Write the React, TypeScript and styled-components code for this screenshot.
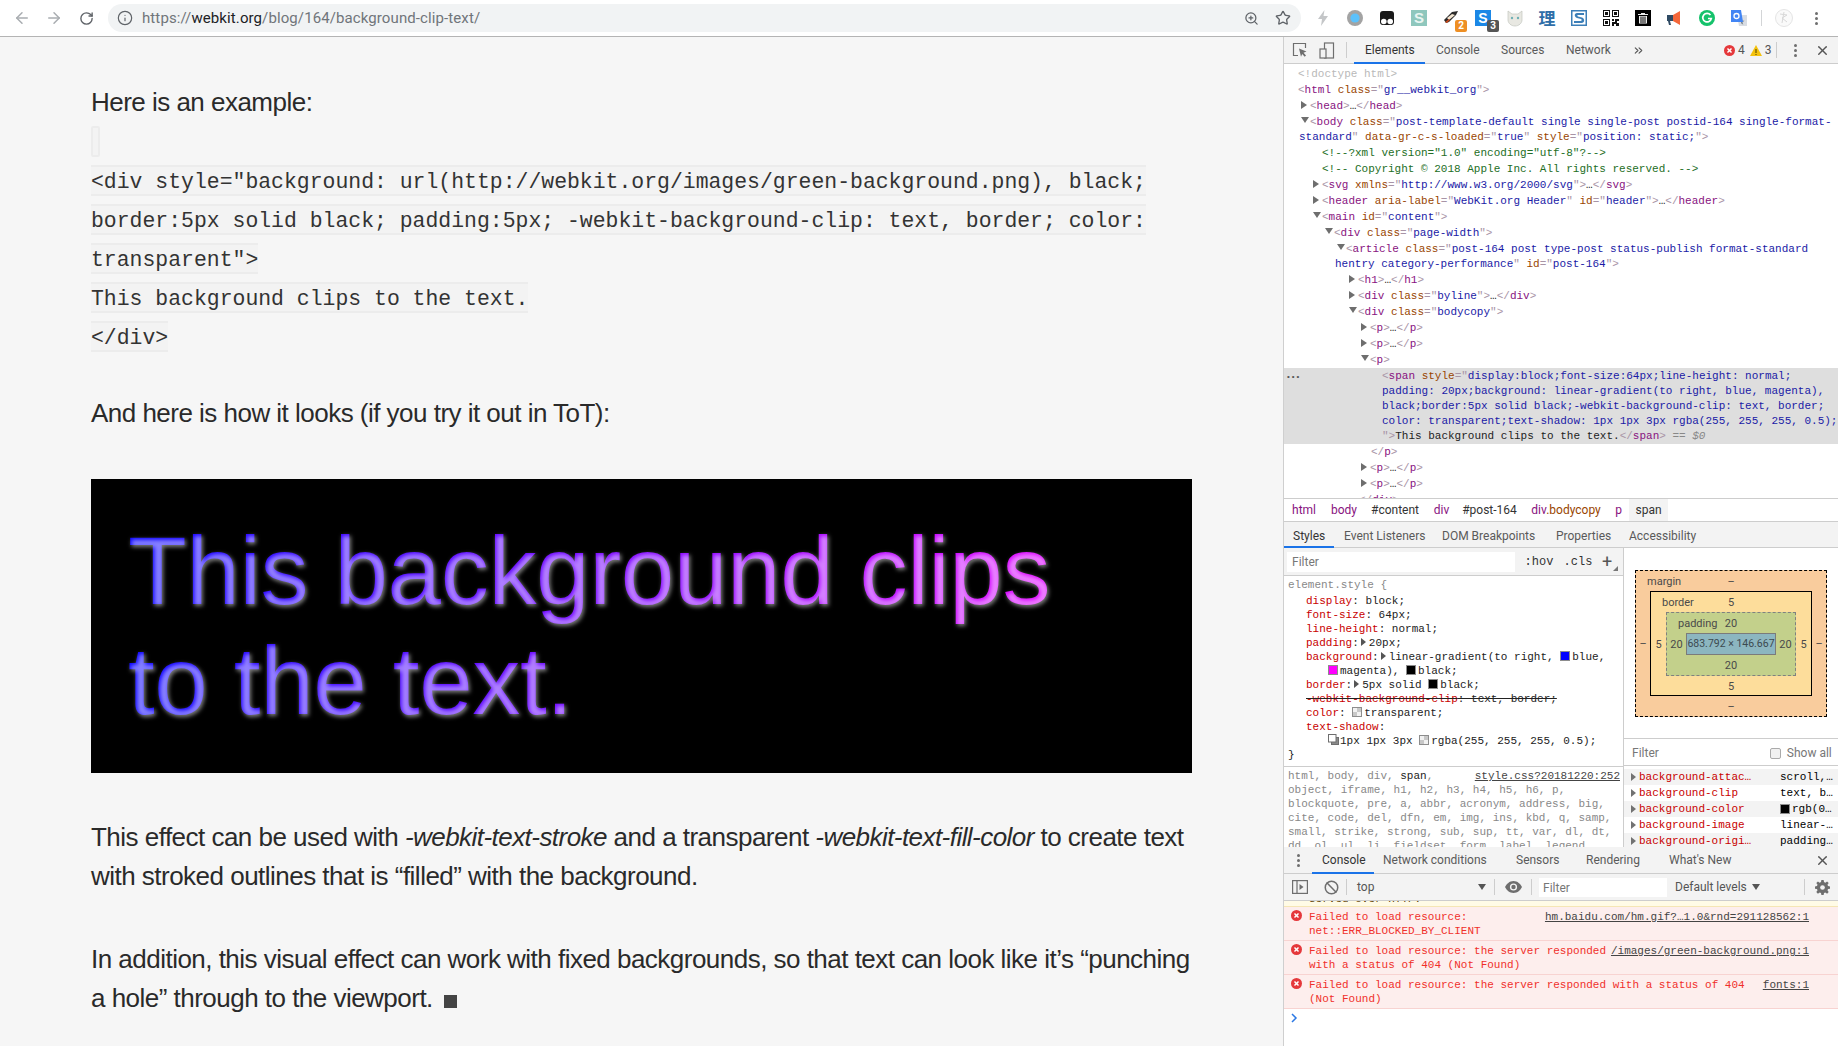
import React from 'react';
import styled, { createGlobalStyle } from 'styled-components';
import { ArrowLeft, ArrowRight, RotateCw, Info, ZoomIn, Star, X, ChevronsRight, Ban } from 'lucide-react';

const MONO = `"Liberation Mono", monospace`;
const UI = `Roboto, "Liberation Sans", sans-serif`;

const Global = createGlobalStyle`
  html, body { margin: 0; padding: 0; background: #fff; }
  * { box-sizing: border-box; }
`;

const Shell = styled.div`
  width: 1838px; height: 1046px; overflow: hidden;
  display: flex; flex-direction: column; font-family: ${UI};
`;

/* ---------- Browser chrome ---------- */
const Chrome = styled.header`
  height: 37px; flex: none; display: flex; align-items: center;
  padding: 0 6px; background: #fff; border-bottom: 1px solid #b4b4b4;
`;
const NavSlot = styled.div<{ $dim?: boolean }>`
  width: 32px; height: 32px; display: flex; align-items: center; justify-content: center;
  color: ${p => (p.$dim ? '#a9adb1' : '#5f6368')};
`;
const Pill = styled.div`
  flex: 1; height: 28px; margin: 0 6px; background: #f1f3f4; border-radius: 14px;
  display: flex; align-items: center; padding: 0 2px 0 9px;
`;
const UrlInfo = styled.div`
  width: 16px; height: 16px; margin-right: 9px; color: #5f6368; display: flex;
`;
const Url = styled.div`
  flex: 1; font-size: 15px; letter-spacing: .1px; color: #70757a; white-space: nowrap;
  b { font-weight: 400; color: #202124; }
`;
const Slot = styled.div`
  width: 32px; height: 28px; flex: none; position: relative;
  display: flex; align-items: center; justify-content: center; color: #5f6368;
`;
const Badge = styled.span<{ $bg: string }>`
  position: absolute; right: 0; bottom: 0; width: 12px; height: 12px; border-radius: 2px;
  background: ${p => p.$bg}; color: #fff; font: 700 10px/12px ${UI}; text-align: center;
`;
const Letter = styled.span<{ $bg: string; $fg: string; $size?: number }>`
  width: 16px; height: 16px; display: block; background: ${p => p.$bg}; color: ${p => p.$fg};
  font: 700 ${p => p.$size || 14}px/16px "Liberation Sans", sans-serif; text-align: center;
`;
const Han = styled.span`
  font: 700 17px/18px "Noto Sans CJK SC", sans-serif; color: #2f6ea8;
`;
const ChromeSep = styled.div`
  width: 13px; flex: none; height: 16px; display: flex; justify-content: center;
  &::before { content: ''; width: 1px; background: #d3d5d7; }
`;

/* ---------- Main split ---------- */
const Split = styled.div`
  flex: 1; min-height: 0; display: flex;
`;
const Page = styled.main`
  width: 1283px; flex: none; background: #f6f6f6; padding: 46px 91px 0;
  overflow: hidden; color: #2a2a2a;
`;
const Para = styled.p<{ $before?: number; $after?: number }>`
  margin: ${p => p.$before ?? 0}px 0 ${p => p.$after ?? 0}px; width: 1101px;
  font: 26px/39px "Liberation Sans", Arial, sans-serif; letter-spacing: -0.52px;
  em { font-style: italic; letter-spacing: -0.55px; }
`;
const CodeLine = styled.div`
  height: 39px; display: flex; align-items: center;
`;
const Chip = styled.code<{ $empty?: boolean }>`
  display: block; height: 31px; min-width: ${p => (p.$empty ? '9px' : '0')}; padding-top: 2px;
  background: #f3f3f3; border-top: 2px solid #ececec; border-bottom: 2px solid #ececec;
  ${p => p.$empty && 'border-left: 2px solid #ececec; border-right: 2px solid #ececec; border-radius: 2px;'}
  font: 21.45px/27px ${MONO}; white-space: pre; color: #333;
`;
const Clip = styled.div`
  width: 1101px; margin-bottom: 45px;
  font: 96px/110px "Liberation Sans", Arial, sans-serif; letter-spacing: -0.3px;
  padding: 30px; border: 7.5px solid #000;
  background: linear-gradient(to right, blue, magenta), #000;
  -webkit-background-clip: text, border-box;
  background-clip: text, border-box;
  color: transparent;
  text-shadow: 1.5px 1.5px 4.5px rgba(255, 255, 255, .5);
`;
const Square = styled.span`
  display: inline-block; width: 13px; height: 13px; background: #444; margin-left: 4px; vertical-align: -1px;
`;

/* ---------- Devtools ---------- */
const Dev = styled.aside`
  flex: 1; min-width: 0; display: flex; flex-direction: column;
  border-left: 1px solid #cfcfcf; background: #fff; overflow: hidden;
`;
const Bar = styled.div<{ $h: number; $bg?: string }>`
  height: ${p => p.$h}px; flex: none; display: flex; align-items: center;
  background: ${p => p.$bg || '#f3f3f3'}; border-bottom: 1px solid #cdcdcd; position: relative;
`;
const ToolSlot = styled.div<{ $w: number }>`
  width: ${p => p.$w}px; flex: none; height: 100%; display: flex; align-items: center; justify-content: center;
  color: #6e6e6e;
`;
const VSep = styled.div`
  width: 1px; height: 16px; flex: none; background: #cdcdcd;
`;
const Tab = styled.div<{ $w: number; $active?: boolean; $inset?: number; $drop?: number }>`
  width: ${p => p.$w}px; flex: none; height: calc(100% + 1px); margin-bottom: -1px;
  display: flex; align-items: center; padding: ${p => p.$drop ?? 0}px 0 0 ${p => p.$inset ?? 0}px;
  font-size: 12px; white-space: nowrap; color: ${p => (p.$active ? '#333' : '#5a5a5a')};
  border-bottom: 2px solid ${p => (p.$active ? '#1a73e8' : 'transparent')};
`;
const Counts = styled.div`
  display: flex; align-items: center; font-size: 12px; color: #555; flex: none;
`;
const Count = styled.span<{ $right: number }>`
  margin: 0 ${p => p.$right}px 0 3px;
`;
const Plus = styled.span`
  font-size: 18px; color: #555; line-height: 1;
`;
const Tree = styled.section`
  height: 434px; flex: none; overflow: hidden; padding-top: 2px;
  font: 11px/15px ${MONO}; color: #222;
`;
const TreeRow = styled.div<{ $x: number }>`
  padding: 1px 0 0 ${p => p.$x}px; white-space: pre;
`;
const WrapRow = styled.div<{ $x: number }>`
  padding-left: ${p => p.$x}px; white-space: pre;
`;
const Selected = styled.div`
  background: #dedede; position: relative; padding-top: 1px;
`;
const Dots = styled.span`
  position: absolute; left: 2px; top: 2px; color: #555; letter-spacing: 0; font-size: 8px; line-height: 13px;
`;
const Tw = styled.span<{ $open?: boolean }>`
  display: inline-block; width: 9px; margin-left: -9px; height: 8px; position: relative;
  &::before {
    content: ''; position: absolute; left: 0; top: 0;
    ${p => p.$open
      ? 'border-left: 4px solid transparent; border-right: 4px solid transparent; border-top: 6px solid #6e6e6e;'
      : 'border-top: 4px solid transparent; border-bottom: 4px solid transparent; border-left: 6px solid #6e6e6e;'}
  }
`;
const B = styled.span` color: #a894a6; `;
const T = styled.span` color: #881280; `;
const A = styled.span` color: #994500; `;
const V = styled.span` color: #1a1aa6; `;
const C = styled.span` color: #236e25; `;
const G = styled.span` color: #b9b9b9; `;
const Q = styled.span` color: #888; font-style: italic; `;

const Crumbs = styled.nav`
  height: 24px; flex: none; display: flex; align-items: stretch;
  border-top: 1px solid #cdcdcd; border-bottom: 1px solid #cdcdcd; font-size: 12px;
`;
const Crumb = styled.span<{ $w: number; $on?: boolean; $c?: string }>`
  width: ${p => p.$w}px; flex: none; display: flex; align-items: center; justify-content: center;
  color: ${p => p.$c || '#881280'}; background: ${p => (p.$on ? '#f3f3f3' : 'transparent')};
  b { font-weight: 400; color: #994500; }
`;
const Panes = styled.div`
  height: 299px; flex: none; display: flex; overflow: hidden;
`;
const StylesPane = styled.div`
  width: 340px; flex: none; border-right: 1px solid #cdcdcd; overflow: hidden;
`;
const FilterBar = styled.div`
  height: 28px; display: flex; align-items: center; background: #f3f3f3;
  border-bottom: 1px solid #cdcdcd; padding-left: 3px; position: relative;
`;
const FilterBox = styled.div<{ $w: number }>`
  width: ${p => p.$w}px; height: 20px; flex: none; background: #fff; padding-left: 5px;
  font-size: 12px; line-height: 20px; color: #777;
`;
const Hov = styled.span<{ $w: number }>`
  width: ${p => p.$w}px; flex: none; font: 12px ${MONO}; color: #333; text-align: center;
`;
const Corner = styled.span`
  position: absolute; right: 5px; bottom: 4px; width: 0; height: 0;
  border-left: 5px solid transparent; border-bottom: 5px solid #777;
`;
const Rule = styled.div<{ $bottom?: number; $top?: number }>`
  padding: ${p => p.$top ?? 2}px 0 ${p => p.$bottom ?? 4}px 4px;
  font: 11px/14px ${MONO}; color: #222; white-space: pre;
`;
const Selector = styled.div`
  margin-bottom: 2px; color: #888;
`;
const RuleDivider = styled.div`
  border-bottom: 1px solid #cdcdcd;
`;
const Prop = styled.div<{ $x?: number; $struck?: boolean }>`
  padding-left: ${p => p.$x ?? 18}px;
  ${p => p.$struck && 'text-decoration: line-through;'}
`;
const N = styled.span` color: #c80000; `;
const Gr = styled.span` color: #888; `;
const Dk = styled.span` color: #222; `;
const Sw = styled.span<{ $c: string }>`
  display: inline-block; width: 10px; height: 10px; margin-right: 2px; vertical-align: -1px;
  background: ${p => p.$c}; border: 1px solid #8d8d8d;
`;
const Checker = styled(Sw)`
  background: conic-gradient(#c8c8c8 0 25%, #f2f2f2 0 50%, #c8c8c8 0 75%, #f2f2f2 0);
`;
const ShadowIcon = styled.svg`
  margin-right: 1px; vertical-align: -1px;
`;
const Tri = styled.span`
  display: inline-block; width: 0; height: 0; margin: 0 3px 0 2px;
  border-top: 4px solid transparent; border-bottom: 4px solid transparent; border-left: 5px solid #555;
`;
const SrcLink = styled.a`
  float: right; margin-right: 3px; color: #444; text-decoration: underline;
`;
const SidePane = styled.div`
  flex: 1; min-width: 0; overflow: hidden;
`;
const BoxWrap = styled.div`
  height: 191px; padding: 22px 0 0 11px; border-bottom: 1px solid #cdcdcd;
`;
const Layer = styled.div<{ $w: number; $h: number; $bg: string; $line: string; $cols: number; $rows: number }>`
  width: ${p => p.$w}px; height: ${p => p.$h}px; background: ${p => p.$bg}; border: ${p => p.$line};
  display: grid; grid-template-columns: ${p => p.$cols}px 1fr ${p => p.$cols}px;
  grid-template-rows: ${p => p.$rows}px 1fr ${p => p.$rows}px;
  font-size: 11px; color: #4a4a4a; align-items: center; justify-items: center;
`;
const LayerTop = styled.div`
  grid-column: 1 / -1; width: 100%; display: grid; grid-template-columns: 1fr auto 1fr;
`;
const LayerLabel = styled.span`
  padding-left: 11px;
`;
const LayerBottom = styled.div`
  grid-column: 1 / -1; text-align: center;
`;
const Core = styled.div`
  width: 90px; height: 22px; background: #8cb6c0; border: 1px solid #7b7b7b;
  font-size: 10.5px; line-height: 20px; text-align: center; color: #3c4a50; white-space: nowrap;
`;
const ShowAll = styled.div`
  height: 27px; display: flex; align-items: center; padding: 2px 0 0 8px; font-size: 12px; color: #777;
  border-bottom: 1px solid #cdcdcd;
`;
const Check = styled.span`
  width: 11px; height: 11px; margin-left: 111px; margin-right: 6px; border: 1px solid #aaa; border-radius: 2px; background: #f1f1f1;
`;
const CompList = styled.div`
  padding-top: 3px;
`;
const CompRow = styled.div<{ $alt?: boolean }>`
  height: 16px; display: flex; align-items: center; padding-left: 7px;
  background: ${p => (p.$alt ? '#f3f3f3' : '#fff')}; font: 11px/16px ${MONO}; white-space: pre;
`;
const CompName = styled.span`
  width: 141px; flex: none; color: #c80000; margin-left: 1px;
`;
const CompTri = styled(Tri)`
  margin: 0 2px 0 0; border-left-color: #727272;
`;

const DrawerDots = styled.div`
  display: flex; flex-direction: column; gap: 2px;
  i { width: 3px; height: 3px; border-radius: 50%; background: #6e6e6e; display: block; }
`;
const ConsoleFilter = styled.div`
  width: 128px; height: 19px; background: #fff; flex: none; padding-left: 4px; font-size: 12px; line-height: 20px; color: #777;
`;
const Levels = styled.div`
  width: 137px; flex: none; padding-left: 8px; font-size: 12px; color: #555; white-space: nowrap;
`;
const TopCtx = styled.div`
  width: 147px; flex: none; display: flex; justify-content: space-between; padding: 0 8px 0 10px;
  font-size: 12px; color: #555;
`;
const Caret = styled.span`
  display: inline-block; width: 0; height: 0; margin-top: 4px;
  border-left: 4px solid transparent; border-right: 4px solid transparent; border-top: 6px solid #555;
`;
const LevelCaret = styled(Caret)`
  margin: 0 0 1px 5px; vertical-align: middle;
`;
const Log = styled.div`
  flex: 1; overflow: hidden; font: 11px/14px ${MONO};
`;
const WarnStub = styled.div`
  height: 6px; background: #fffbe6; border-bottom: 1px solid #f5e6b5; overflow: hidden; position: relative;
  padding-left: 25px; color: #5c3b00; display: flex; align-items: flex-end;
  span { flex: none; line-height: 14px; }
`;
const ErrRow = styled.div`
  height: 34px; background: #fdeeed; border-bottom: 1px solid #f8d3d1; padding: 3px 29px 0 25px;
  color: #f0302b; position: relative;
`;
const ErrIcon = styled.span`
  position: absolute; left: 7px; top: 3px; display: flex;
`;
const ErrLink = styled.a`
  float: right; color: #444; text-decoration: underline;
`;
const Prompt = styled.div`
  padding: 4px 0 0 7px; color: #2b78e4; height: 24px; display: flex;
`;

const ErrorDot = ({ size = 11 }: { size?: number }) => (
  <svg width={size} height={size} viewBox="0 0 12 12">
    <circle cx="6" cy="6" r="6" fill="#e5383b" />
    <path d="M3.8 3.8l4.4 4.4M8.2 3.8L3.8 8.2" stroke="#fff" strokeWidth="1.6" />
  </svg>
);

const TreeLines = () => (
  <Tree>
    <TreeRow $x={14}><G>&lt;!doctype html&gt;</G></TreeRow>
    <TreeRow $x={14}><B>&lt;</B><T>html</T> <A>class</A><B>="</B><V>gr__webkit_org</V><B>"&gt;</B></TreeRow>
    <TreeRow $x={26}><Tw /><B>&lt;</B><T>head</T><B>&gt;</B>…<B>&lt;/</B><T>head</T><B>&gt;</B></TreeRow>
    <TreeRow $x={26}><Tw $open /><B>&lt;</B><T>body</T> <A>class</A><B>="</B><V>post-template-default single single-post postid-164 single-format-</V></TreeRow>
    <WrapRow $x={15}><V>standard</V><B>"</B> <A>data-gr-c-s-loaded</A><B>="</B><V>true</V><B>"</B> <A>style</A><B>="</B><V>position: static;</V><B>"&gt;</B></WrapRow>
    <TreeRow $x={38}><C>&lt;!--?xml version="1.0" encoding="utf-8"?--&gt;</C></TreeRow>
    <TreeRow $x={38}><C>&lt;!-- Copyright © 2018 Apple Inc. All rights reserved. --&gt;</C></TreeRow>
    <TreeRow $x={38}><Tw /><B>&lt;</B><T>svg</T> <A>xmlns</A><B>="</B><V>http://www.w3.org/2000/svg</V><B>"&gt;</B>…<B>&lt;/</B><T>svg</T><B>&gt;</B></TreeRow>
    <TreeRow $x={38}><Tw /><B>&lt;</B><T>header</T> <A>aria-label</A><B>="</B><V>WebKit.org Header</V><B>"</B> <A>id</A><B>="</B><V>header</V><B>"&gt;</B>…<B>&lt;/</B><T>header</T><B>&gt;</B></TreeRow>
    <TreeRow $x={38}><Tw $open /><B>&lt;</B><T>main</T> <A>id</A><B>="</B><V>content</V><B>"&gt;</B></TreeRow>
    <TreeRow $x={50}><Tw $open /><B>&lt;</B><T>div</T> <A>class</A><B>="</B><V>page-width</V><B>"&gt;</B></TreeRow>
    <TreeRow $x={62}><Tw $open /><B>&lt;</B><T>article</T> <A>class</A><B>="</B><V>post-164 post type-post status-publish format-standard</V></TreeRow>
    <WrapRow $x={51}><V>hentry category-performance</V><B>"</B> <A>id</A><B>="</B><V>post-164</V><B>"&gt;</B></WrapRow>
    <TreeRow $x={74}><Tw /><B>&lt;</B><T>h1</T><B>&gt;</B>…<B>&lt;/</B><T>h1</T><B>&gt;</B></TreeRow>
    <TreeRow $x={74}><Tw /><B>&lt;</B><T>div</T> <A>class</A><B>="</B><V>byline</V><B>"&gt;</B>…<B>&lt;/</B><T>div</T><B>&gt;</B></TreeRow>
    <TreeRow $x={74}><Tw $open /><B>&lt;</B><T>div</T> <A>class</A><B>="</B><V>bodycopy</V><B>"&gt;</B></TreeRow>
    <TreeRow $x={86}><Tw /><B>&lt;</B><T>p</T><B>&gt;</B>…<B>&lt;/</B><T>p</T><B>&gt;</B></TreeRow>
    <TreeRow $x={86}><Tw /><B>&lt;</B><T>p</T><B>&gt;</B>…<B>&lt;/</B><T>p</T><B>&gt;</B></TreeRow>
    <TreeRow $x={86}><Tw $open /><B>&lt;</B><T>p</T><B>&gt;</B></TreeRow>
    <Selected>
      <Dots>•••</Dots>
      <WrapRow $x={98}><B>&lt;</B><T>span</T> <A>style</A><B>="</B><V>display:block;font-size:64px;line-height: normal;</V></WrapRow>
      <WrapRow $x={98}><V>padding: 20px;background: linear-gradient(to right, blue, magenta),</V></WrapRow>
      <WrapRow $x={98}><V>black;border:5px solid black;-webkit-background-clip: text, border;</V></WrapRow>
      <WrapRow $x={98}><V>color: transparent;text-shadow: 1px 1px 3px rgba(255, 255, 255, 0.5);</V></WrapRow>
      <WrapRow $x={98}><B>"&gt;</B>This background clips to the text.<B>&lt;/</B><T>span</T><B>&gt;</B> <Q>== $0</Q></WrapRow>
    </Selected>
    <TreeRow $x={87}><B>&lt;/</B><T>p</T><B>&gt;</B></TreeRow>
    <TreeRow $x={86}><Tw /><B>&lt;</B><T>p</T><B>&gt;</B>…<B>&lt;/</B><T>p</T><B>&gt;</B></TreeRow>
    <TreeRow $x={86}><Tw /><B>&lt;</B><T>p</T><B>&gt;</B>…<B>&lt;/</B><T>p</T><B>&gt;</B></TreeRow>
    <TreeRow $x={75}><B>&lt;/</B><T>div</T><B>&gt;</B></TreeRow>
  </Tree>
);

const BoxModel = () => (
  <BoxWrap>
    <Layer $w={192} $h={147} $bg="#f9cc9d" $line="1px dashed #000" $cols={14} $rows={20}>
      <LayerTop><LayerLabel>margin</LayerLabel><span>–</span><span /></LayerTop>
      <span>–</span>
      <Layer $w={162} $h={105} $bg="#fddd9b" $line="1px solid #000" $cols={15} $rows={20}>
        <LayerTop><LayerLabel>border</LayerLabel><span>5</span><span /></LayerTop>
        <span>5</span>
        <Layer $w={130} $h={64} $bg="#c3d08b" $line="1px dashed #808080" $cols={19} $rows={20}>
          <LayerTop><LayerLabel>padding</LayerLabel><span>20</span><span /></LayerTop>
          <span>20</span>
          <Core>683.792 × 146.667</Core>
          <span>20</span>
          <LayerBottom>20</LayerBottom>
        </Layer>
        <span>5</span>
        <LayerBottom>5</LayerBottom>
      </Layer>
      <span>–</span>
      <LayerBottom>–</LayerBottom>
    </Layer>
  </BoxWrap>
);

const computed: [string, string][] = [
  ['background-attac…', 'scroll,…'],
  ['background-clip', 'text, b…'],
  ['background-color', 'rgb(0…'],
  ['background-image', 'linear-…'],
  ['background-origi…', 'padding…'],
];

export default function App() {
  return (
    <Shell>
      <Global />
      <Chrome>
        <NavSlot $dim><ArrowLeft size={18} strokeWidth={2} /></NavSlot>
        <NavSlot $dim><ArrowRight size={18} strokeWidth={2} /></NavSlot>
        <NavSlot><RotateCw size={15} strokeWidth={2.2} /></NavSlot>
        <Pill>
          <UrlInfo><Info size={16} strokeWidth={1.8} /></UrlInfo>
          <Url>https://<b>webkit.org</b>/blog/164/background-clip-text/</Url>
          <Slot><ZoomIn size={15} strokeWidth={2} /></Slot>
          <Slot><Star size={16} strokeWidth={2} /></Slot>
        </Pill>
        <Slot>
          <svg width="10" height="16" viewBox="0 0 10 16"><path d="M6.5 0L0 9h4l-1 7 7-10H5.5z" fill="#c4c6c8" /></svg>
        </Slot>
        <Slot>
          <svg width="16" height="16" viewBox="0 0 16 16"><circle cx="8" cy="8" r="8" fill="#a3a3a3" /><circle cx="8" cy="8" r="4.6" fill="#5cc1fb" /></svg>
        </Slot>
        <Slot>
          <svg width="16" height="16" viewBox="0 0 16 16"><rect x="1" y="1" width="14" height="14" rx="3" fill="#1a1a1a" /><circle cx="4.8" cy="11.5" r="2.8" fill="#fff" /><circle cx="11.2" cy="11.5" r="2.8" fill="#fff" /></svg>
        </Slot>
        <Slot><Letter $bg="#8fc7bd" $fg="#e9f5f2" $size={15}>S</Letter></Slot>
        <Slot>
          <svg width="16" height="16" viewBox="0 0 16 16"><path d="M1 10L9 2l6-1-2 4-7 7-3 1z" fill="#2b2b2b" /><path d="M4 8l5-4 3 1-6 5z" fill="#f3e6d2" /><path d="M2 12l4-3 1 1-3 3z" fill="#c8471a" /></svg>
          <Badge $bg="#ee8f24">2</Badge>
        </Slot>
        <Slot>
          <Letter $bg="#1b87e6" $fg="#fff" $size={14}>S</Letter>
          <Badge $bg="#555">3</Badge>
        </Slot>
        <Slot>
          <svg width="18" height="18" viewBox="0 0 18 18"><path d="M2 2l4 3h6l4-3v9c0 3-3 6-7 6s-7-3-7-6z" fill="#e8e8e2" stroke="#c3c5be" strokeWidth=".7" /><circle cx="6" cy="9" r="1.2" fill="#6fb0b5" /><circle cx="12" cy="9" r="1.2" fill="#6fb0b5" /></svg>
        </Slot>
        <Slot><Han>理</Han></Slot>
        <Slot>
          <svg width="16" height="16" viewBox="0 0 16 16"><rect width="16" height="16" fill="#3c7fb8" /><rect x="1.5" y="1.5" width="13" height="13" fill="#fff" /><path d="M13 3H6C3 3 3 7 6 8l4 1c1 .5 1 2-.5 2H3v2h7.500c3.500 0 3.500-4.500.5-5.500L7 6.500C6 6 6 5 7 5h6z" fill="#3c7fb8" /></svg>
        </Slot>
        <Slot>
          <svg width="16" height="16" viewBox="0 0 16 16" shapeRendering="crispEdges"><path d="M0 0h7v7H0zM1 1v5h5V1zM2 2h3v3H2zM9 0h7v7H9zM10 1v5h5V1zM11 2h3v3h-3zM0 9h7v7H0zM1 10v5h5v-5zM2 11h3v3H2z" fill="#111" fillRule="evenodd" /><path d="M9 9h2v2H9zM12 9h4v2h-2v2h2v3h-3v-2h-2v2H9v-4h3z" fill="#111" /></svg>
        </Slot>
        <Slot>
          <svg width="16" height="16" viewBox="0 0 16 16"><rect width="16" height="16" fill="#000" /><path d="M3 4h10v1H3zM6 3h4v1H6zM4 6h8v7.500H4z" fill="#eee" /><path d="M5.500 6.500h1v6.500h-1zM7.500 6.500h1v6.500h-1zM9.500 6.500h1v6.500h-1z" fill="#000" /></svg>
        </Slot>
        <Slot>
          <svg width="16" height="16" viewBox="0 0 16 16"><path d="M0 5h6v6H3l1 4H2L1 11H0z" fill="#2f4a63" /><path d="M6 5l7-4v14l-7-4z" fill="#f4673a" /></svg>
        </Slot>
        <Slot>
          <svg width="16" height="16" viewBox="0 0 16 16"><circle cx="8" cy="8" r="8" fill="#15c26b" /><path d="M11.500 5A4.300 4.300 0 1 0 12.300 8.500H9" fill="none" stroke="#fff" strokeWidth="1.7" /></svg>
        </Slot>
        <Slot>
          <svg width="16" height="16" viewBox="0 0 16 16"><path d="M6 5h10v11H8z" fill="#d9dde3" /><path d="M10 8l1 2.500 2.500.2-2 1.500.8 2.500-2.300-1.500z" fill="#7d8790" /><path d="M0 0h10l2 12H0z" fill="#4285f4" /><circle cx="5.500" cy="6" r="2.500" fill="none" stroke="#fff" strokeWidth="1.300" /></svg>
        </Slot>
        <ChromeSep />
        <Slot>
          <svg width="18" height="18" viewBox="0 0 18 18"><circle cx="9" cy="9" r="8.500" fill="#fafafa" stroke="#e4e4e4" /><path d="M5 5l7 1-5 3 5 4M9 3l-2 11" stroke="#d8d8d8" fill="none" /></svg>
        </Slot>
        <Slot><DrawerDots><i /><i /><i /></DrawerDots></Slot>
      </Chrome>
      <Split>
        <Page>
          <Para>Here is an example:</Para>
          <CodeLine><Chip $empty /></CodeLine>
          <CodeLine><Chip>{'<div style="background: url(http://webkit.org/images/green-background.png), black;'}</Chip></CodeLine>
          <CodeLine><Chip>{'border:5px solid black; padding:5px; -webkit-background-clip: text, border; color:'}</Chip></CodeLine>
          <CodeLine><Chip>{'transparent">'}</Chip></CodeLine>
          <CodeLine><Chip>This background clips to the text.</Chip></CodeLine>
          <CodeLine><Chip>{'</div>'}</Chip></CodeLine>
          <Para $before={38} $after={46}>And here is how it looks (if you try it out in ToT):</Para>
          <Clip>This background clips<br />to the text.</Clip>
          <Para $after={44}>This effect can be used with <em>-webkit-text-stroke</em> and a transparent <em>-webkit-text-fill-color</em> to create text with stroked outlines that is “filled” with the background.</Para>
          <Para>In addition, this visual effect can work with fixed backgrounds, so that text can look like it’s “punching a hole” through to the viewport. <Square /></Para>
        </Page>
        <Dev>
          <Bar $h={27}>
            <ToolSlot $w={32}>
              <svg width="16" height="16" viewBox="0 0 16 16" fill="none"><path d="M6 13.500H1.500v-12h12V6" stroke="#6e6e6e" strokeWidth="1.200" /><path d="M7 6.500l7.500 3-3 1.200 2.500 2.800-1.300 1.200-2.500-2.800-1.200 2.800z" fill="#6e6e6e" /></svg>
            </ToolSlot>
            <ToolSlot $w={22}>
              <svg width="16" height="17" viewBox="0 0 16 17" fill="none" stroke="#6e6e6e" strokeWidth="1.200"><rect x="5.500" y="1" width="9" height="15" /><rect x="1" y="7" width="6" height="9" fill="#f3f3f3" /></svg>
            </ToolSlot>
            <ToolSlot $w={8} />
            <VSep />
            <Tab $w={7} />
            <Tab $w={71} $active $inset={11} $drop={1}>Elements</Tab>
            <Tab $w={76} $inset={11} $drop={1}>Console</Tab>
            <Tab $w={65} $drop={1}>Sources</Tab>
            <Tab $w={64} $drop={1}>Network</Tab>
            <ToolSlot $w={16}><ChevronsRight size={13} strokeWidth={2} color="#555" /></ToolSlot>
            <ToolSlot $w={78} />
            <Counts>
              <ErrorDot size={11} />
              <Count $right={5}>4</Count>
              <svg width="12" height="11" viewBox="0 0 12 11"><path d="M6 0l6 11H0z" fill="#f4c20d" /><path d="M6 4v4M6 9v1" stroke="#5b4a00" strokeWidth="1.100" /></svg>
              <Count $right={4}>3</Count>
            </Counts>
            <VSep />
            <ToolSlot $w={38}><DrawerDots><i /><i /><i /></DrawerDots></ToolSlot>
            <ToolSlot $w={16}><X size={15} strokeWidth={2.2} color="#555" /></ToolSlot>
          </Bar>
          <TreeLines />
          <Crumbs>
            <Crumb $w={9} />
            <Crumb $w={22}>html</Crumb>
            <Crumb $w={16} />
            <Crumb $w={26}>body</Crumb>
            <Crumb $w={14} />
            <Crumb $w={48} $c="#333">#content</Crumb>
            <Crumb $w={14} />
            <Crumb $w={17}>div</Crumb>
            <Crumb $w={12} />
            <Crumb $w={55} $c="#333">#post-164</Crumb>
            <Crumb $w={13} />
            <Crumb $w={72}><span>div<b>.bodycopy</b></span></Crumb>
            <Crumb $w={13} />
            <Crumb $w={7}>p</Crumb>
            <Crumb $w={7} />
            <Crumb $w={39} $on $c="#333">span</Crumb>
          </Crumbs>
          <Bar $h={26}>
            <Tab $w={50} $active $inset={9} $drop={3}>Styles</Tab>
            <Tab $w={108} $inset={10} $drop={3}>Event Listeners</Tab>
            <Tab $w={114} $drop={3}>DOM Breakpoints</Tab>
            <Tab $w={73} $drop={3}>Properties</Tab>
            <Tab $w={80} $drop={3}>Accessibility</Tab>
          </Bar>
          <Panes>
            <StylesPane>
              <FilterBar>
                <FilterBox $w={228}>Filter</FilterBox>
                <Hov $w={48}>:hov</Hov>
                <Hov $w={30}>.cls</Hov>
                <ToolSlot $w={28}><Plus>+</Plus></ToolSlot>
                <Corner />
              </FilterBar>
              <Rule>
                <Selector>element.style {'{'}</Selector>
                <Prop><N>display</N>: block;</Prop>
                <Prop><N>font-size</N>: 64px;</Prop>
                <Prop><N>line-height</N>: normal;</Prop>
                <Prop><N>padding</N>:<Tri />20px;</Prop>
                <Prop><N>background</N>:<Tri />linear-gradient(to right, <Sw $c="#0000ff" />blue,</Prop>
                <Prop $x={40}><Sw $c="#ff00ff" />magenta), <Sw $c="#000" />black;</Prop>
                <Prop><N>border</N>:<Tri />5px solid <Sw $c="#000" />black;</Prop>
                <Prop $struck><N>-webkit-background-clip</N>: text, border;</Prop>
                <Prop><N>color</N>: <Checker $c="#ddd" />transparent;</Prop>
                <Prop><N>text-shadow</N>:</Prop>
                <Prop $x={40}>
                  <ShadowIcon width="11" height="11" viewBox="0 0 11 11" fill="none" stroke="#6e6e6e"><rect x="3.500" y="3.500" width="7" height="7" fill="#8a8a8a" /><rect x=".5" y=".5" width="7.500" height="7.500" fill="#fff" /></ShadowIcon>
                  1px 1px 3px <Checker $c="#eee" />rgba(255, 255, 255, 0.5);
                </Prop>
                <div>{'}'}</div>
              </Rule>
              <RuleDivider />
              <Rule $top={2} $bottom={0}>
                <SrcLink>style.css?20181220:252</SrcLink>
                <div><Gr>html, body, div, </Gr><Dk>span</Dk><Gr>,</Gr></div>
                <div><Gr>object, iframe, h1, h2, h3, h4, h5, h6, p,</Gr></div>
                <div><Gr>blockquote, pre, a, abbr, acronym, address, big,</Gr></div>
                <div><Gr>cite, code, del, dfn, em, img, ins, kbd, q, samp,</Gr></div>
                <div><Gr>small, strike, strong, sub, sup, tt, var, dl, dt,</Gr></div>
                <div><Gr>dd, ol, ul, li, fieldset, form, label, legend,</Gr></div>
              </Rule>
            </StylesPane>
            <SidePane>
              <BoxModel />
              <ShowAll>Filter<Check />Show all</ShowAll>
              <CompList>
                {computed.map(([name, value], i) => (
                  <CompRow key={name} $alt={i % 2 === 0}>
                    <CompTri />
                    <CompName>{name}</CompName>
                    {name === 'background-color' && <Sw $c="#000" />}
                    <span>{value}</span>
                  </CompRow>
                ))}
              </CompList>
            </SidePane>
          </Panes>
          <Bar $h={27}>
            <ToolSlot $w={28}><DrawerDots><i /><i /><i /></DrawerDots></ToolSlot>
            <Tab $w={62} $active $inset={10}>Console</Tab>
            <Tab $w={9} />
            <Tab $w={133}>Network conditions</Tab>
            <Tab $w={70}>Sensors</Tab>
            <Tab $w={83}>Rendering</Tab>
            <Tab $w={145}>What's New</Tab>
            <ToolSlot $w={16}><X size={15} strokeWidth={2.2} color="#555" /></ToolSlot>
          </Bar>
          <Bar $h={27}>
            <ToolSlot $w={32}>
              <svg width="16" height="14" viewBox="0 0 16 14" fill="none" stroke="#6e6e6e" strokeWidth="1.200"><rect x=".6" y=".6" width="14.800" height="12.800" /><path d="M5 1v12" /><path d="M7.500 4l4 3-4 3z" fill="#6e6e6e" stroke="none" /></svg>
            </ToolSlot>
            <ToolSlot $w={30}><Ban size={15} strokeWidth={2.4} color="#6e6e6e" /></ToolSlot>
            <VSep />
            <TopCtx>top<Caret /></TopCtx>
            <VSep />
            <ToolSlot $w={36}>
              <svg width="17" height="12" viewBox="0 0 17 12"><path d="M8.500 0C4.500 0 1.500 3 0 6c1.500 3 4.500 6 8.500 6s7-3 8.500-6c-1.500-3-4.500-6-8.500-6z" fill="#6e6e6e" /><circle cx="8.500" cy="6" r="3.600" fill="#f3f3f3" /><circle cx="8.500" cy="6" r="2.200" fill="#6e6e6e" /></svg>
            </ToolSlot>
            <VSep />
            <ToolSlot $w={7} />
            <ConsoleFilter>Filter</ConsoleFilter>
            <Levels>Default levels<LevelCaret /></Levels>
            <VSep />
            <ToolSlot $w={34}>
              <svg width="15" height="15" viewBox="0 0 16 16"><path d="M6.800 0h2.400l.4 2.200 1.400.6 1.900-1.300 1.700 1.700-1.300 1.900.6 1.400 2.100.3v2.400l-2.100.4-.6 1.400 1.300 1.900-1.700 1.700-1.900-1.300-1.400.6-.4 2.100H6.800l-.4-2.100-1.400-.6-1.900 1.300-1.700-1.700 1.300-1.900-.6-1.400L0 9.200V6.800l2.100-.3.600-1.400-1.300-1.900 1.700-1.700L5 2.800l1.400-.6z" fill="#6e6e6e" /><circle cx="8" cy="8" r="2.500" fill="#f3f3f3" /></svg>
            </ToolSlot>
          </Bar>
          <Log>
            <WarnStub><span>served over HTTP.</span></WarnStub>
            <ErrRow>
              <ErrIcon><ErrorDot /></ErrIcon>
              <ErrLink>hm.baidu.com/hm.gif?…1.0&amp;rnd=291128562:1</ErrLink>
              Failed to load resource: net::ERR_BLOCKED_BY_CLIENT
            </ErrRow>
            <ErrRow>
              <ErrIcon><ErrorDot /></ErrIcon>
              <ErrLink>/images/green-background.png:1</ErrLink>
              Failed to load resource: the server responded with a status of 404 (Not Found)
            </ErrRow>
            <ErrRow>
              <ErrIcon><ErrorDot /></ErrIcon>
              <ErrLink>fonts:1</ErrLink>
              Failed to load resource: the server responded with a status of 404 (Not Found)
            </ErrRow>
            <Prompt>
              <svg width="7" height="10" viewBox="0 0 7 10" fill="none" stroke="#2b78e4" strokeWidth="1.500"><path d="M1 1l4 4-4 4" /></svg>
            </Prompt>
          </Log>
        </Dev>
      </Split>
    </Shell>
  );
}
